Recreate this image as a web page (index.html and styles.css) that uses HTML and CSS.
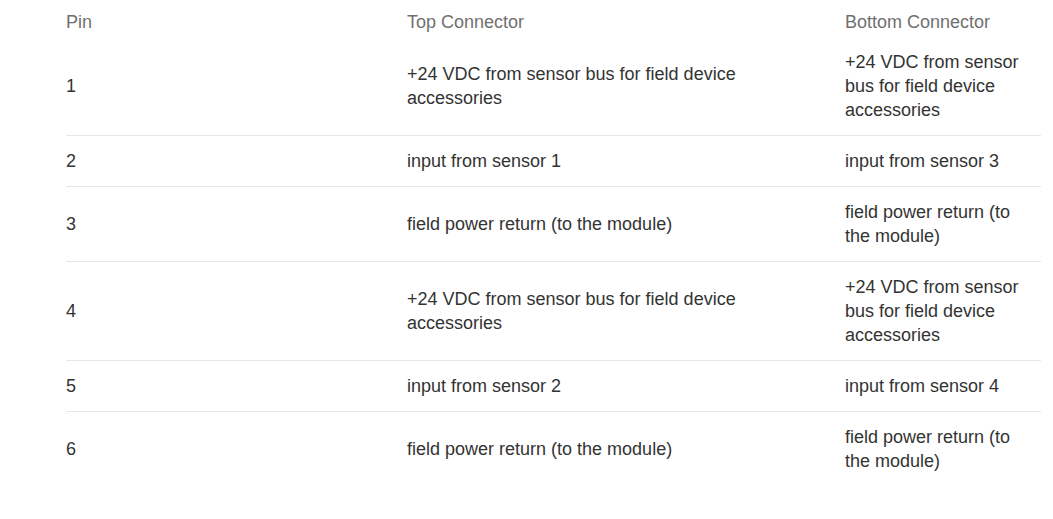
FILE: index.html
```html
<!DOCTYPE html>
<html>
<head>
<meta charset="utf-8">
<link rel="stylesheet" href="styles.css">
</head>
<body>
<table class="pins">
  <thead>
    <tr><th class="c-pin">Pin</th><th class="c-top">Top Connector</th><th class="c-bot">Bottom Connector</th></tr>
  </thead>
  <tbody>
    <tr><td class="c-pin">1</td><td class="c-top">+24 VDC from sensor bus for field device accessories</td><td class="c-bot">+24 VDC from sensor bus for field device accessories</td></tr>
    <tr><td class="c-pin">2</td><td class="c-top">input from sensor 1</td><td class="c-bot">input from sensor 3</td></tr>
    <tr><td class="c-pin">3</td><td class="c-top">field power return (to the module)</td><td class="c-bot">field power return (to the module)</td></tr>
    <tr><td class="c-pin">4</td><td class="c-top">+24 VDC from sensor bus for field device accessories</td><td class="c-bot">+24 VDC from sensor bus for field device accessories</td></tr>
    <tr><td class="c-pin">5</td><td class="c-top">input from sensor 2</td><td class="c-bot">input from sensor 4</td></tr>
    <tr><td class="c-pin">6</td><td class="c-top">field power return (to the module)</td><td class="c-bot">field power return (to the module)</td></tr>
  </tbody>
</table>
</body>
</html>
```
FILE: styles.css
```css
html, body {
  margin: 0;
  padding: 0;
  background: #fff;
}
body {
  padding-left: 66px;
  font-family: "Liberation Sans", Arial, sans-serif;
}
.pins {
  border-collapse: collapse;
  table-layout: fixed;
  width: 975px;
}
.pins th,
.pins td {
  box-sizing: border-box;
}
.pins th {
  text-align: left;
  font-weight: normal;
  font-size: 18px;
  line-height: 24px;
  color: #707070;
  padding: 10px 0 3px 0;
  vertical-align: middle;
}
.pins td {
  font-size: 18px;
  line-height: 24px;
  color: #333;
  padding: 13px 0;
  vertical-align: middle;
  border-bottom: 1px solid #e6e6e6;
}
.pins tbody tr:last-child td {
  border-bottom: none;
}
.c-pin { width: 341px; }
.c-top { width: 438px; }
.c-bot { width: 196px; }
.pins .c-top { padding-right: 40px; }
.pins .c-bot { padding-right: 11px; }
```
